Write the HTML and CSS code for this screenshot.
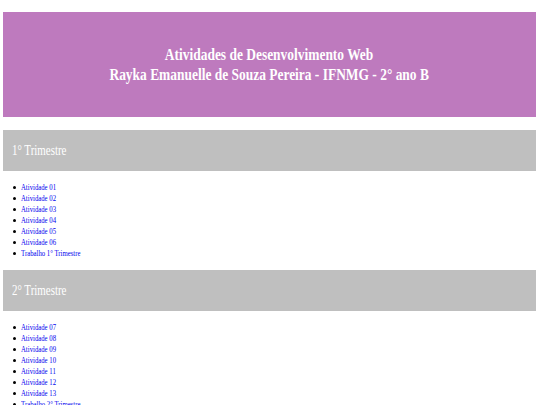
FILE: index.html
```html
<!DOCTYPE html>
<html lang="pt-BR">
<head>
<meta charset="utf-8">
<title>Atividades de Desenvolvimento Web</title>
<link rel="stylesheet" href="styles.css">
</head>
<body>
<header class="banner">
  <h1 class="banner-title">
    <span class="squeeze-c">Atividades de Desenvolvimento Web</span><br>
    <span class="squeeze-c">Rayka Emanuelle de Souza Pereira - IFNMG - 2° ano B</span>
  </h1>
</header>

<section class="term">
  <h2 class="term-title"><span class="squeeze-h">1° Trimestre</span></h2>
  <ul class="links">
    <li><a href="#"><span class="squeeze-l">Atividade 01</span></a></li>
    <li><a href="#"><span class="squeeze-l">Atividade 02</span></a></li>
    <li><a href="#"><span class="squeeze-l">Atividade 03</span></a></li>
    <li><a href="#"><span class="squeeze-l">Atividade 04</span></a></li>
    <li><a href="#"><span class="squeeze-l">Atividade 05</span></a></li>
    <li><a href="#"><span class="squeeze-l">Atividade 06</span></a></li>
    <li><a href="#"><span class="squeeze-l">Trabalho 1° Trimestre</span></a></li>
  </ul>
</section>

<section class="term">
  <h2 class="term-title"><span class="squeeze-h">2° Trimestre</span></h2>
  <ul class="links">
    <li><a href="#"><span class="squeeze-l">Atividade 07</span></a></li>
    <li><a href="#"><span class="squeeze-l">Atividade 08</span></a></li>
    <li><a href="#"><span class="squeeze-l">Atividade 09</span></a></li>
    <li><a href="#"><span class="squeeze-l">Atividade 10</span></a></li>
    <li><a href="#"><span class="squeeze-l">Atividade 11</span></a></li>
    <li><a href="#"><span class="squeeze-l">Atividade 12</span></a></li>
    <li><a href="#"><span class="squeeze-l">Atividade 13</span></a></li>
    <li><a href="#"><span class="squeeze-l">Trabalho 2° Trimestre</span></a></li>
  </ul>
</section>
</body>
</html>
```

FILE: styles.css
```css
html, body {
  background: #ffffff;
}

body {
  margin: 0;
  padding: 12px 4px 0 3px;
  font-family: "Liberation Serif", "Times New Roman", serif;
  color: #000000;
}

.squeeze-c {
  display: inline-block;
  transform: scaleX(0.84);
  transform-origin: center center;
  white-space: nowrap;
}

.squeeze-h {
  display: inline-block;
  transform: scaleX(0.78);
  transform-origin: left center;
  white-space: nowrap;
}

.squeeze-l {
  display: inline-block;
  transform: scaleX(0.75);
  transform-origin: left center;
  white-space: nowrap;
}

.banner {
  height: 105px;
  background: #be7abe;
  display: flex;
  align-items: center;
  justify-content: center;
  margin-bottom: 13px;
}

.banner-title {
  margin: 0;
  font-size: 16px;
  line-height: 20px;
  font-weight: bold;
  color: #ffffff;
  text-align: center;
}

.term-title {
  margin: 0;
  height: 41px;
  display: flex;
  align-items: center;
  padding-left: 9px;
  background: #bfbfbf;
  color: #ffffff;
  font-size: 14px;
  font-weight: normal;
}

.links {
  margin: 10.5px 0 11.5px;
  padding-left: 10px;
  font-size: 9px;
  line-height: 11px;
  list-style: none;
}

.links li {
  display: flex;
  align-items: center;
  gap: 5px;
}

.links li::before {
  content: "";
  width: 3px;
  height: 3px;
  border-radius: 50%;
  background: #000000;
  flex: none;
}

.links a {
  color: #0000ee;
  text-decoration: underline;
}
```
